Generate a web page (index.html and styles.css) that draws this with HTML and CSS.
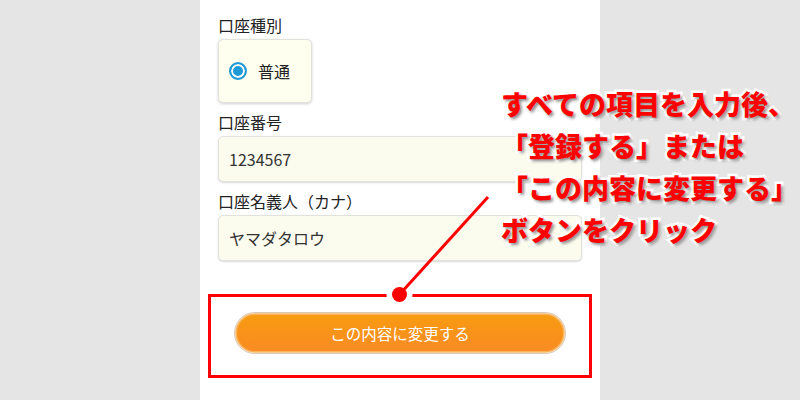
FILE: index.html
```html
<!DOCTYPE html>
<html lang="ja">
<head>
  <meta charset="UTF-8" />
  <meta name="viewport" content="width=device-width, initial-scale=1.0" />
  <title>口座情報</title>
  <link rel="stylesheet" href="styles.css">
</head>
<body>
  <div class="page">
    <form class="form">
      <div class="field-label">口座種別</div>
      <label class="radio-box">
        <span class="radio"></span>
        <span>普通</span>
      </label>

      <div class="field-label">口座番号</div>
      <div class="text-input">1234567</div>

      <div class="field-label">口座名義人（カナ）</div>
      <div class="text-input">ヤマダタロウ</div>

      <button type="button" class="submit-btn">この内容に変更する</button>
    </form>
  </div>

  <!-- annotation overlay -->
  <svg class="callout" width="800" height="400" viewBox="0 0 800 400">
    <rect x="209.5" y="295.5" width="381" height="81" fill="none" stroke="#ff0000" stroke-width="3"/>
    <circle cx="399.5" cy="294.5" r="13" fill="#fff"/>
    <line x1="399.5" y1="294.5" x2="488" y2="197" stroke="#ff0000" stroke-width="3"/>
    <circle cx="399.5" cy="294.5" r="7.5" fill="#ff0000"/>
  </svg>
  <div class="note">
    すべての項目を入力後、<br>
    「登録する」または<br>
    「この内容に変更する」<br>
    ボタンをクリック
  </div>
</body>
</html>
```

FILE: styles.css
```css
/* Base */
body {
  margin: 0;
  background: #e5e5e5;
  font-family: 'Noto Sans CJK JP', 'Noto Sans', sans-serif;
  color: #333;
  position: relative;
  height: 400px;
  overflow: hidden;
}
.page {
  width: 400px;
  height: 400px;
  margin: 0 auto;
  background: #fff;
  box-sizing: border-box;
  padding: 14px 18px 0;
}
.form {
  display: flex;
  flex-direction: column;
  align-items: flex-start;
}
.field-label {
  font-size: 16px;
  line-height: 22px;
  color: #222;
  margin-bottom: 3px;
}
/* Radio */
.radio-box {
  display: flex;
  align-items: center;
  gap: 11px;
  box-sizing: border-box;
  width: 94px;
  height: 64px;
  padding-left: 10px;
  margin-bottom: 8px;
  background: #fffff0;
  border: 1px solid #e2e2dc;
  border-radius: 5px;
  box-shadow: 0 1px 3px rgba(0,0,0,0.18);
  font-size: 16px;
  color: #222;
}
.radio {
  width: 18px;
  height: 18px;
  box-sizing: border-box;
  border: 2px solid #1e9ad6;
  border-radius: 50%;
  background: #1e9ad6;
  box-shadow: inset 0 0 0 2px #fff;
}
/* Text inputs */
.text-input {
  align-self: stretch;
  box-sizing: border-box;
  height: 46px;
  padding-left: 10px;
  display: flex;
  align-items: center;
  margin-bottom: 8px;
  background: #fbfbee;
  border: 1px solid #e2e2dc;
  border-radius: 5px;
  box-shadow: 0 1px 2px rgba(0,0,0,0.15);
  font-size: 16px;
  color: #333;
}
/* Button */
.submit-btn {
  align-self: stretch;
  margin: 44px 17px 0;
  height: 40px;
  border-radius: 20px;
  border: 1px solid #f6c98c;
  background: linear-gradient(#f89b10, #f98b24);
  box-shadow: 0 0 0 1px #d8c9b8, inset 0 0 0 1px #fbb45a;
  color: #fff;
  font-family: inherit;
  font-size: 15.5px;
}
/* Annotation */
.callout {
  position: absolute;
  top: 0;
  left: 0;
  pointer-events: none;
}
.note {
  position: absolute;
  top: 83px;
  left: 501px;
  font-size: 27px;
  line-height: 42px;
  font-weight: 900;
  color: #ff0000;
  white-space: nowrap;
  -webkit-text-stroke: 5px #fff;
  paint-order: stroke fill;
  text-shadow: 2px 2px 3px rgba(0,0,0,0.45);
}
```
